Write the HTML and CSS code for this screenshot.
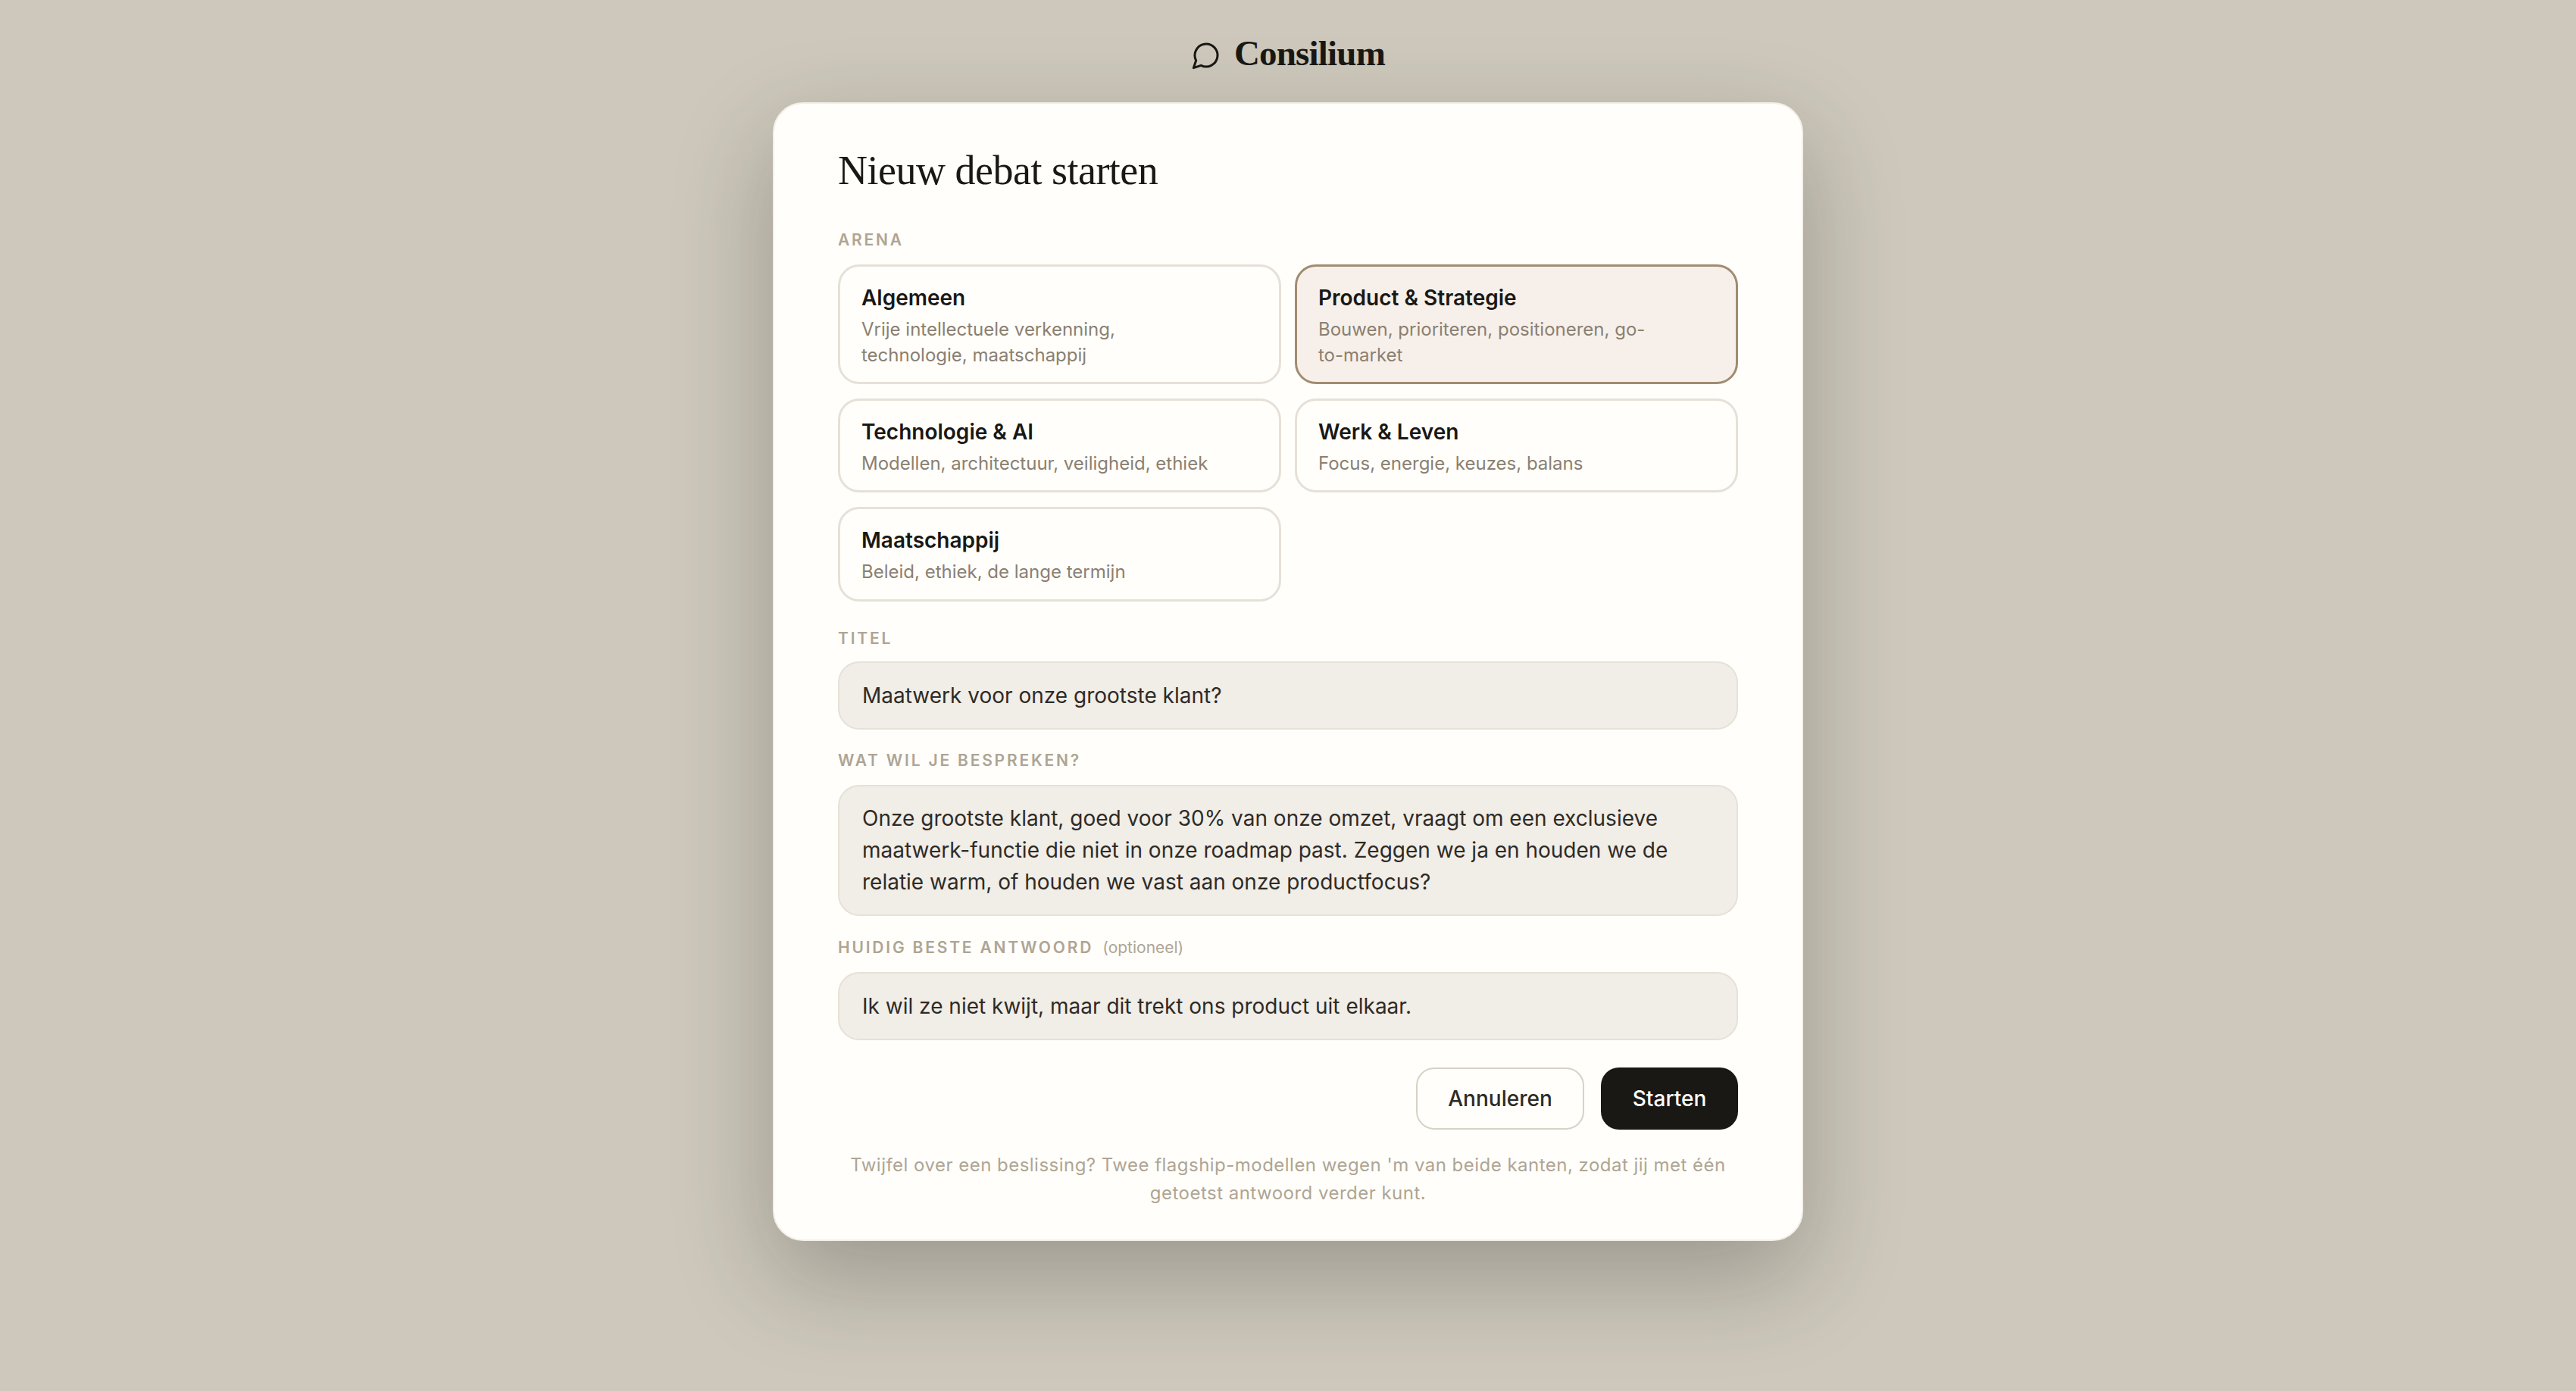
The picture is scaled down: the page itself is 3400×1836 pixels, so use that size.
FILE: index.html
```html
<!DOCTYPE html>
<html lang="nl">
<head>
<meta charset="utf-8">
<title>Consilium</title>
<link rel="stylesheet" href="styles.css">
</head>
<body>
<main class="page">
  <header class="brand">
    <svg class="brand-icon" viewBox="0 0 24 24" aria-hidden="true"><path d="M7.9 20A9 9 0 1 0 4 16.1L2 22Z"/></svg>
    <span class="brand-name">Consilium</span>
  </header>
  <form class="modal">
    <h1 class="modal-title">Nieuw debat starten</h1>
    <div class="label">Arena</div>
    <div class="arena-grid">
      <button type="button" class="arena"><span class="arena-name">Algemeen</span><span class="arena-desc">Vrije intellectuele verkenning, technologie, maatschappij</span></button>
      <button type="button" class="arena arena-active"><span class="arena-name">Product &amp; Strategie</span><span class="arena-desc">Bouwen, prioriteren, positioneren, go-to-market</span></button>
      <button type="button" class="arena"><span class="arena-name">Technologie &amp; AI</span><span class="arena-desc">Modellen, architectuur, veiligheid, ethiek</span></button>
      <button type="button" class="arena"><span class="arena-name">Werk &amp; Leven</span><span class="arena-desc">Focus, energie, keuzes, balans</span></button>
      <button type="button" class="arena"><span class="arena-name">Maatschappij</span><span class="arena-desc">Beleid, ethiek, de lange termijn</span></button>
    </div>
    <label class="label label-tight" for="titel">Titel</label>
    <input class="field" id="titel" value="Maatwerk voor onze grootste klant?">
    <label class="label" for="vraag">Wat wil je bespreken?</label>
    <textarea class="field field-area" id="vraag" rows="3">Onze grootste klant, goed voor 30% van onze omzet, vraagt om een exclusieve maatwerk-functie die niet in onze roadmap past. Zeggen we ja en houden we de relatie warm, of houden we vast aan onze productfocus?</textarea>
    <label class="label" for="antwoord">Huidig beste antwoord <span class="label-note">(optioneel)</span></label>
    <input class="field" id="antwoord" value="Ik wil ze niet kwijt, maar dit trekt ons product uit elkaar.">
    <div class="actions">
      <button type="button" class="btn btn-ghost">Annuleren</button>
      <button type="submit" class="btn btn-primary">Starten</button>
    </div>
    <p class="note">Twijfel over een beslissing? Twee flagship-modellen wegen 'm van beide kanten, zodat jij met één getoetst antwoord verder kunt.</p>
  </form>
</main>
</body>
</html>
```
FILE: styles.css
```css
* { box-sizing: border-box; }
html, body { margin: 0; height: 100%; }
body {
  background: #cdc8bb;
  font-family: Inter, "Liberation Sans", sans-serif;
  color: #1a1815;
  overflow: hidden;
}
.page {
  display: flex;
  flex-direction: column;
  align-items: center;
  padding-top: 42px;
}
.brand {
  display: flex;
  align-items: center;
  gap: 17px;
  height: 56px;
  margin-bottom: 37px;
}
.brand-icon {
  width: 40px;
  height: 40px;
  fill: none;
  stroke: #1a1815;
  stroke-width: 1.8;
  stroke-linejoin: round;
  stroke-linecap: round;
  margin-top: 6px;
}
.brand-name {
  font-family: "Liberation Serif", serif;
  font-size: 47px;
  font-weight: 700;
  letter-spacing: -0.8px;
  line-height: 56px;
}
.modal {
  width: 1360px;
  padding: 52px 84px 43px;
  background: #fffefa;
  border: 2px solid #f3efe8;
  border-radius: 40px;
  box-shadow: 0 48px 128px rgba(26, 24, 21, 0.27);
  display: flex;
  flex-direction: column;
}
.modal-title {
  margin: 0 0 43px;
  font-family: "Liberation Serif", serif;
  font-size: 54px;
  font-weight: 400;
  line-height: 72px;
  letter-spacing: -0.5px;
}
.label {
  display: block;
  height: 26px;
  margin: 0 0 19px;
  font-size: 21px;
  line-height: 26px;
  font-weight: 600;
  letter-spacing: 2.8px;
  text-transform: uppercase;
  color: #aea595;
}
.label-tight { margin-bottom: 17px; }
.label-note {
  font-size: 21px;
  font-weight: 400;
  letter-spacing: 0;
  text-transform: none;
  margin-left: 4px;
}
.arena-grid {
  display: grid;
  grid-template-columns: 1fr 1fr;
  gap: 19px 18px;
  margin-bottom: 36px;
}
.arena {
  display: flex;
  flex-direction: column;
  align-items: flex-start;
  gap: 7px;
  padding: 23px 28px 18.8px;
  background: #fffefa;
  border: 3px solid #e6e0d8;
  border-radius: 28px;
  font-family: inherit;
  text-align: left;
  color: inherit;
}
.arena-active {
  background: #f7f0ea;
  border-color: #a08c70;
}
.arena-name {
  font-size: 28px;
  line-height: 36px;
  font-weight: 600;
  color: #1a1815;
}
.arena-desc {
  max-width: 462px;
  font-size: 24px;
  line-height: 33.6px;
  color: #8a8072;
}
.field {
  display: block;
  width: 100%;
  height: 90px;
  margin: 0 0 28px;
  padding: 0 30px;
  background: #f1ede7;
  border: 2px solid #e6e0d8;
  border-radius: 28px;
  font-family: inherit;
  font-size: 28px;
  color: #2e2b26;
  outline: none;
}
.field-area {
  height: 173px;
  margin-bottom: 29px;
  padding: 21px 30px;
  line-height: 42px;
  resize: none;
  overflow: hidden;
}
.actions {
  display: flex;
  justify-content: flex-end;
  gap: 22px;
  margin-top: 8px;
  margin-bottom: 28px;
}
.btn {
  height: 82px;
  border-radius: 24px;
  font-family: inherit;
  font-size: 28px;
  font-weight: 500;
}
.btn-ghost {
  width: 222px;
  background: transparent;
  border: 2px solid #d8d2c6;
  color: #2e2b26;
}
.btn-primary {
  width: 181px;
  background: #1a1815;
  border: 0;
  color: #fffefa;
}
.note {
  margin: 0;
  font-size: 24px;
  line-height: 37px;
  letter-spacing: 0.48px;
  text-align: center;
  color: #aea595;
}
```
